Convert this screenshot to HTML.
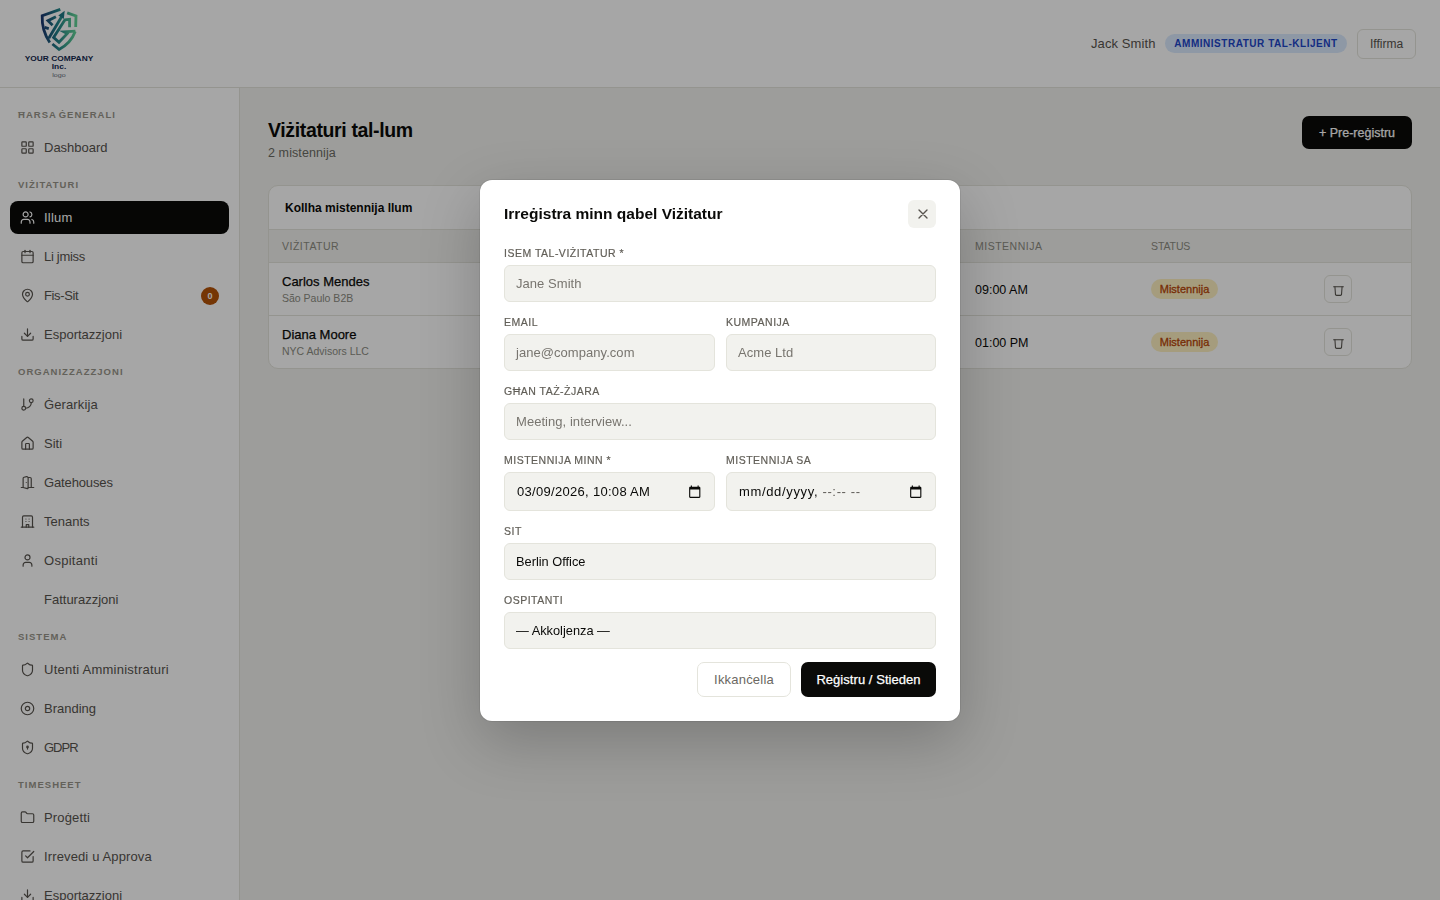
<!DOCTYPE html>
<html lang="mt">
<head>
<meta charset="utf-8">
<title>Viżitaturi tal-lum</title>
<style>
*{box-sizing:border-box;margin:0;padding:0}
html,body{width:1440px;height:900px;overflow:hidden}
body{font-family:"Liberation Sans",sans-serif;background:#f1f1ee;color:#0a0a08;position:relative;-webkit-font-smoothing:antialiased}
svg{display:block}
/* header */
.hdr{position:absolute;left:0;top:0;width:1440px;height:88px;background:#fff;border-bottom:1px solid #e4e4dc}
.logo{position:absolute;left:24px;top:8px;width:70px;height:71px}
.user{position:absolute;left:1091px;top:36px;font-size:13px;letter-spacing:.1px;line-height:16px;color:#57534e;white-space:nowrap}
.role{position:absolute;left:1165px;top:34px;width:182px;height:19px;border-radius:10px;background:#dbeafe;color:#1d45c8;font-size:10px;font-weight:bold;letter-spacing:.53px;line-height:19px;text-align:center;white-space:nowrap}
.signout{position:absolute;left:1357px;top:29px;width:59px;height:30px;border:1px solid #e4e4dc;border-radius:6px;font-size:12px;line-height:28px;text-align:center;color:#57534e;background:#fff}
/* sidebar */
.side{position:absolute;left:0;top:88px;width:240px;height:812px;background:#fff;border-right:1px solid #e4e4dc;padding:6px 10px 0 10px;overflow:hidden}
.sec{height:37px;line-height:42px;padding-left:8px;font-size:9.5px;letter-spacing:1.02px;word-spacing:-1.5px;color:#99968b;font-weight:bold;white-space:nowrap}
.it{height:33px;display:flex;align-items:center;padding-left:10px;border-radius:8px;font-size:13px;color:#57534e;white-space:nowrap;position:relative}
.it + .it{margin-top:6px}
.it svg{width:15px;height:15px;margin-right:9px;flex:none;stroke:currentColor;fill:none;stroke-width:1.9;stroke-linecap:round;stroke-linejoin:round}
.it.noic{padding-left:34px}
.it.act{background:#0a0a08;color:#fff}
.cnt{position:absolute;right:10px;top:8px;width:18px;height:18px;border-radius:9px;background:#b45309;color:#fff;font-size:9px;font-weight:bold;line-height:18px;text-align:center}
/* main */
.main{position:absolute;left:240px;top:88px;width:1200px;height:812px}
h1{position:absolute;left:28px;top:29px;font-size:19.5px;line-height:26px;font-weight:bold;letter-spacing:-.36px;white-space:nowrap}
.sub{position:absolute;left:28px;top:57px;letter-spacing:.1px;font-size:12.5px;line-height:16px;color:#6b6b64;white-space:nowrap}
.prebtn{position:absolute;left:1062px;top:28px;width:110px;height:33px;border-radius:7px;background:#0a0a08;color:#fff;font-size:12.5px;line-height:34px;text-align:center;white-space:nowrap;-webkit-text-stroke:.25px #fff}
.card{position:absolute;left:28px;top:97px;width:1144px;height:184px;border:1px solid #e4e4dc;border-radius:10px;background:#fff;overflow:hidden}
.chd{height:44px;border-bottom:1px solid #e4e4dc;padding-left:16px;font-size:12px;font-weight:bold;line-height:45px}
.thd{height:33px;border-bottom:1px solid #e4e4dc;background:#f1f1ee;position:relative;font-size:10.5px;letter-spacing:.5px;color:#8c8c82}
.thd span{position:absolute;top:0;line-height:32px}
.row{height:53px;position:relative;border-bottom:1px solid #e4e4dc}
.row:last-child{border-bottom:0}
.nm{position:absolute;left:13px;top:11px;font-size:13px;line-height:16px;white-space:nowrap;-webkit-text-stroke:.25px #0a0a08}
.co{position:absolute;left:13px;top:28px;font-size:10.5px;line-height:14px;color:#8c8c82;white-space:nowrap}
.tm{position:absolute;left:706px;top:19px;font-size:12.5px;line-height:16px;white-space:nowrap}
.st{position:absolute;left:882px;top:16px;width:67px;height:20px;border-radius:10px;background:#fdf0c0;color:#b8460a;font-size:11px;line-height:20px;text-align:center;-webkit-text-stroke:.3px #b8460a}
.del{position:absolute;left:1055px;top:12px;width:28px;height:28px;border:1px solid #e4e4dc;border-radius:6px;background:#fff}
.del svg{position:absolute;left:6.5px;top:7.5px;width:13px;height:13px;stroke:#57534e;fill:none;stroke-width:2;stroke-linecap:round;stroke-linejoin:round}
/* overlay + modal */
.ov{position:absolute;left:0;top:0;width:1440px;height:900px;background:rgba(0,0,0,.35)}
.modal{position:absolute;left:480px;top:180px;transform:translateZ(0);width:480px;height:541px;background:#fff;border-radius:12px;box-shadow:0 0 0 1px rgba(0,0,0,.07),0 20px 60px rgba(0,0,0,.22)}
.mt{position:absolute;left:24px;top:24px;font-size:15.5px;line-height:20px;font-weight:bold;white-space:nowrap}
.x{position:absolute;left:428px;top:20px;width:28px;height:28px;border-radius:6px;background:#f2f2ee}
.x svg{position:absolute;left:6.5px;top:6px;width:16px;height:16px;stroke:#57534e;fill:none;stroke-width:2;stroke-linecap:round}
.lb{position:absolute;font-size:10.5px;line-height:14px;letter-spacing:.5px;color:#625f58;-webkit-text-stroke:.2px #625f58;white-space:nowrap}
.in{position:absolute;height:37px;border:1px solid #e4e4dc;border-radius:6px;background:#f2f2ee;font-size:13px;line-height:35px;padding-left:11px;color:#78756f;letter-spacing:.05px;white-space:nowrap;overflow:hidden}
.in.v{color:#0a0a08;font-size:12.8px;letter-spacing:0}
.in.dt{height:39px;line-height:37px;font-size:13px;padding-left:12px;letter-spacing:.3px}
.in.dt.e{letter-spacing:.65px}
.cal{position:absolute;right:12.5px;top:11.5px;width:13.5px;height:13.5px}
.b1{position:absolute;left:217px;top:482px;width:94px;height:35px;border:1px solid #e4e4dc;border-radius:7px;background:#fff;color:#6b6862;font-size:13px;letter-spacing:.2px;line-height:33px;text-align:center}
.b2{position:absolute;left:321px;top:482px;width:135px;height:35px;border-radius:7px;background:#0a0a08;color:#fff;font-size:13px;letter-spacing:.05px;line-height:35px;text-align:center;-webkit-text-stroke:.25px #fff}
</style>
</head>
<body>
<div class="hdr">
  <svg class="logo" viewBox="0 0 70 71" width="70" height="71">
  <defs><linearGradient id="lg" x1="18" y1="0" x2="52" y2="0" gradientUnits="userSpaceOnUse"><stop offset="0" stop-color="#1b3870"/><stop offset=".45" stop-color="#1f7f88"/><stop offset="1" stop-color="#62d296"/></linearGradient></defs>
  <rect width="70" height="71" fill="#fff"/>
  <g fill="none" stroke="url(#lg)" stroke-width="2.8" stroke-linejoin="miter" stroke-linecap="butt">
    <path d="M36.3 1.4 L18.2 7.8 Q17.6 22.5 25.8 34.5"/>
    <path d="M31.9 8.7 L24 12.7 L28.6 17.2"/>
    <path d="M20.6 19.4 L24.8 20.6"/>
    <path d="M24.8 30.2 L38.2 7.8"/>
    <path d="M43.2 4.9 L52 8 L51.7 19"/>
    <path d="M40.6 11.9 L45.6 11.4 L45.6 19.2"/>
    <path d="M41.3 11.2 L29.6 29.4 L35 34.2 L43.2 25.6 L40 23.8 L51.4 23.2"/>
    <path d="M28.4 36 L35 41.4 Q47 35 51.2 23.4"/>
  </g>
  <path d="M34.3 7.6 L40.7 2.8 L39.8 10.9 Z" fill="#1f7884"/>
  <text x="35" y="53.2" text-anchor="middle" font-family="Liberation Sans, sans-serif" font-weight="bold" font-size="7.6" fill="#14284f" textLength="68.5" lengthAdjust="spacingAndGlyphs">YOUR COMPANY</text>
  <text x="35" y="61.2" text-anchor="middle" font-family="Liberation Sans, sans-serif" font-weight="bold" font-size="7.2" fill="#14284f" textLength="14.5" lengthAdjust="spacingAndGlyphs">Inc.</text>
  <text x="35" y="68.6" text-anchor="middle" font-family="Liberation Sans, sans-serif" font-size="6" fill="#6b7280" textLength="13.5" lengthAdjust="spacingAndGlyphs">logo</text>
</svg>
  <div class="user">Jack Smith</div>
  <div class="role">AMMINISTRATUR TAL-KLIJENT</div>
  <div class="signout">Iffirma</div>
</div>
<div class="side">
  <div class="sec">ĦARSA ĠENERALI</div>
  <div class="it"><svg viewBox="0 0 24 24"><rect width="7" height="7" x="3" y="3" rx="1"/><rect width="7" height="7" x="14" y="3" rx="1"/><rect width="7" height="7" x="14" y="14" rx="1"/><rect width="7" height="7" x="3" y="14" rx="1"/></svg>Dashboard</div>
  <div class="sec">VIŻITATURI</div>
  <div class="it act"><svg viewBox="0 0 24 24"><path d="M16 21v-2a4 4 0 0 0-4-4H6a4 4 0 0 0-4 4v2"/><circle cx="9" cy="7" r="4"/><path d="M22 21v-2a4 4 0 0 0-3-3.87"/><path d="M16 3.13a4 4 0 0 1 0 7.75"/></svg><span style="letter-spacing:0.22px">Illum</span></div>
  <div class="it"><svg viewBox="0 0 24 24"><path d="M8 2v4"/><path d="M16 2v4"/><rect width="18" height="18" x="3" y="4" rx="2"/><path d="M3 10h18"/></svg><span style="letter-spacing:-0.3px">Li jmiss</span></div>
  <div class="it"><svg viewBox="0 0 24 24"><path d="M20 10c0 4.993-5.539 10.193-7.399 11.799a1 1 0 0 1-1.202 0C9.539 20.193 4 14.993 4 10a8 8 0 0 1 16 0"/><circle cx="12" cy="10" r="3"/></svg><span style="letter-spacing:-0.36px">Fis-Sit</span><span class="cnt">0</span></div>
  <div class="it"><svg viewBox="0 0 24 24"><path d="M21 15v4a2 2 0 0 1-2 2H5a2 2 0 0 1-2-2v-4"/><path d="M7 10l5 5 5-5"/><path d="M12 15V3"/></svg>Esportazzjoni</div>
  <div class="sec">ORGANIZZAZZJONI</div>
  <div class="it"><svg viewBox="0 0 24 24"><path d="M6 3v12"/><circle cx="18" cy="6" r="3"/><circle cx="6" cy="18" r="3"/><path d="M18 9a9 9 0 0 1-9 9"/></svg><span style="letter-spacing:0.11px">Ġerarkija</span></div>
  <div class="it"><svg viewBox="0 0 24 24"><path d="M15 21v-8a1 1 0 0 0-1-1h-4a1 1 0 0 0-1 1v8"/><path d="M3 10a2 2 0 0 1 .709-1.528l7-5.999a2 2 0 0 1 2.582 0l7 5.999A2 2 0 0 1 21 10v9a2 2 0 0 1-2 2H5a2 2 0 0 1-2-2z"/></svg>Siti</div>
  <div class="it"><svg viewBox="0 0 24 24"><path d="M13 4h3a2 2 0 0 1 2 2v14"/><path d="M2 20h3"/><path d="M13 20h9"/><path d="M10 12v.01"/><path d="M13 4.562v16.157a1 1 0 0 1-1.242.97L5 20V5.562a2 2 0 0 1 1.515-1.94l4-1A2 2 0 0 1 13 4.561Z"/></svg><span style="letter-spacing:-0.13px">Gatehouses</span></div>
  <div class="it"><svg viewBox="0 0 24 24"><path d="M4 21V5a2 2 0 0 1 2-2h12a2 2 0 0 1 2 2v16"/><path d="M2 21h20"/><path d="M10 21v-4h4v4"/><path d="M9.500 8h.01"/><path d="M14.500 8h.01"/><path d="M9.500 12h.01"/><path d="M14.500 12h.01"/></svg>Tenants</div>
  <div class="it"><svg viewBox="0 0 24 24"><path d="M19 21v-2a4 4 0 0 0-4-4H9a4 4 0 0 0-4 4v2"/><circle cx="12" cy="7" r="4"/></svg><span style="letter-spacing:0.28px">Ospitanti</span></div>
  <div class="it noic">Fatturazzjoni</div>
  <div class="sec">SISTEMA</div>
  <div class="it"><svg viewBox="0 0 24 24"><path d="M20 13c0 5-3.5 7.5-7.66 8.95a1 1 0 0 1-.67-.01C7.5 20.5 4 18 4 13V6a1 1 0 0 1 1-1c2 0 4.500-1.200 6.240-2.720a1.170 1.170 0 0 1 1.520 0C14.510 3.810 17 5 19 5a1 1 0 0 1 1 1z"/></svg><span style="letter-spacing:0.24px">Utenti Amministraturi</span></div>
  <div class="it"><svg viewBox="0 0 24 24"><circle cx="12" cy="12" r="10"/><circle cx="12" cy="12" r="3.5"/></svg>Branding</div>
  <div class="it"><svg viewBox="0 0 24 24"><path d="M20 13c0 5-3.5 7.5-7.66 8.95a1 1 0 0 1-.67-.01C7.5 20.5 4 18 4 13V6a1 1 0 0 1 1-1c2 0 4.500-1.200 6.240-2.720a1.170 1.170 0 0 1 1.520 0C14.510 3.810 17 5 19 5a1 1 0 0 1 1 1z"/><circle cx="12" cy="11" r="1.2"/><path d="M12 12.5v2"/></svg><span style="letter-spacing:-1px">GDPR</span></div>
  <div class="sec">TIMESHEET</div>
  <div class="it"><svg viewBox="0 0 24 24"><path d="M20 20a2 2 0 0 0 2-2V8a2 2 0 0 0-2-2h-7.9a2 2 0 0 1-1.69-.9L9.6 3.900A2 2 0 0 0 7.930 3H4a2 2 0 0 0-2 2v13a2 2 0 0 0 2 2Z"/></svg><span style="letter-spacing:0.15px">Proġetti</span></div>
  <div class="it"><svg viewBox="0 0 24 24"><path d="m9 11 3 3L22 4"/><path d="M21 12v7a2 2 0 0 1-2 2H5a2 2 0 0 1-2-2V5a2 2 0 0 1 2-2h11"/></svg><span style="letter-spacing:0.13px">Irrevedi u Approva</span></div>
  <div class="it"><svg viewBox="0 0 24 24"><path d="M21 15v4a2 2 0 0 1-2 2H5a2 2 0 0 1-2-2v-4"/><path d="M7 10l5 5 5-5"/><path d="M12 15V3"/></svg>Esportazzjoni</div>
</div>
<div class="main">
  <h1>Viżitaturi tal-lum</h1>
  <div class="sub">2 mistennija</div>
  <div class="prebtn">+ Pre-reġistru</div>
  <div class="card">
    <div class="chd">Kollha mistennija llum</div>
    <div class="thd"><span style="left:13px">VIŻITATUR</span><span style="left:706px">MISTENNIJA</span><span style="left:882px;letter-spacing:-.1px">STATUS</span></div>
    <div class="row"><div class="nm">Carlos Mendes</div><div class="co">São Paulo B2B</div><div class="tm">09:00 AM</div><div class="st">Mistennija</div><div class="del"><svg viewBox="0 0 24 24"><path d="M3 5h18"/><path d="M18.6 5l-1 14.2a2 2 0 0 1-2 1.8H8.400a2 2 0 0 1-2-1.800L5.400 5"/></svg></div></div>
    <div class="row"><div class="nm">Diana Moore</div><div class="co">NYC Advisors LLC</div><div class="tm">01:00 PM</div><div class="st">Mistennija</div><div class="del"><svg viewBox="0 0 24 24"><path d="M3 5h18"/><path d="M18.6 5l-1 14.2a2 2 0 0 1-2 1.8H8.400a2 2 0 0 1-2-1.800L5.400 5"/></svg></div></div>
  </div>
</div>
<div class="ov"></div>
<div class="modal">
  <div class="mt">Irreġistra minn qabel Viżitatur</div>
  <div class="x"><svg viewBox="0 0 24 24"><path d="M18 6 6 18M6 6l12 12"/></svg></div>
  <div class="lb" style="left:24px;top:66px">ISEM TAL-VIŻITATUR *</div>
  <div class="in" style="left:24px;top:85px;width:432px">Jane Smith</div>
  <div class="lb" style="left:24px;top:135px">EMAIL</div>
  <div class="in" style="left:24px;top:154px;width:211px">jane@company.com</div>
  <div class="lb" style="left:246px;top:135px">KUMPANIJA</div>
  <div class="in" style="left:246px;top:154px;width:210px">Acme Ltd</div>
  <div class="lb" style="left:24px;top:204px">GĦAN TAŻ-ŻJARA</div>
  <div class="in" style="left:24px;top:223px;width:432px">Meeting, interview...</div>
  <div class="lb" style="left:24px;top:273px">MISTENNIJA MINN *</div>
  <div class="in v dt" style="left:24px;top:292px;width:211px">03/09/2026, 10:08 AM<svg class="cal" viewBox="0 0 24 24"><path fill="#0a0a08" d="M20 3h-1V1h-2v2H7V1H5v2H4c-1.1 0-2 .9-2 2v16c0 1.1.9 2 2 2h16c1.1 0 2-.9 2-2V5c0-1.1-.9-2-2-2zm0 18H4V8h16v13z"/></svg></div>
  <div class="lb" style="left:246px;top:273px">MISTENNIJA SA</div>
  <div class="in v dt e" style="left:246px;top:292px;width:210px">mm/dd/yyyy, <span style="color:#5f5c57">--:-- --</span><svg class="cal" viewBox="0 0 24 24"><path fill="#0a0a08" d="M20 3h-1V1h-2v2H7V1H5v2H4c-1.1 0-2 .9-2 2v16c0 1.1.9 2 2 2h16c1.1 0 2-.9 2-2V5c0-1.1-.9-2-2-2zm0 18H4V8h16v13z"/></svg></div>
  <div class="lb" style="left:24px;top:344px">SIT</div>
  <div class="in v" style="left:24px;top:363px;width:432px">Berlin Office</div>
  <div class="lb" style="left:24px;top:413px">OSPITANTI</div>
  <div class="in v" style="left:24px;top:432px;width:432px">— Akkoljenza —</div>
  <div class="b1">Ikkanċella</div>
  <div class="b2">Reġistru / Stieden</div>
</div>
</body>
</html>
